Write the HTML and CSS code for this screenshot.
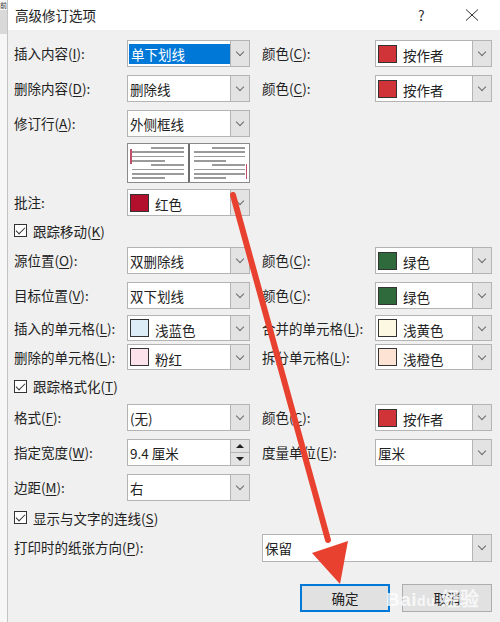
FILE: index.html
```html
<!DOCTYPE html>
<html lang="zh-CN">
<head>
    <meta charset="UTF-8">
    <title>高级修订选项</title>
    <link rel="stylesheet" href="styles.css">
</head>
<body>
    <div class="side">
        <span class="side-glyph">前</span>
        <div class="side-block"></div>
    </div>
    <div class="dialog">
        <div class="titlebar">
            <span class="title">高级修订选项</span>
            <span class="help">?</span>
            <svg class="close" width="16" height="12" viewBox="0 0 16 12">
                <path d="M2 0.5 L14 11.5 M14 0.5 L2 11.5" stroke="#333" stroke-width="1"/>
            </svg>
        </div>

        <div class="form">
            <!-- insert / delete / revision line -->
            <div class="row h35">
                <label>插入内容(<u>I</u>):</label>
                <div class="select"><span class="text selected">单下划线</span><span class="drop"></span></div>
                <label class="rl">颜色(<u>C</u>):</label>
                <div class="select"><i class="swatch red"></i><span class="text lower">按作者</span><span class="drop"></span></div>
            </div>
            <div class="row h35">
                <label>删除内容(<u>D</u>):</label>
                <div class="select"><span class="text">删除线</span><span class="drop"></span></div>
                <label class="rl">颜色(<u>C</u>):</label>
                <div class="select"><i class="swatch red"></i><span class="text lower">按作者</span><span class="drop"></span></div>
            </div>
            <div class="row h33">
                <label>修订行(<u>A</u>):</label>
                <div class="select"><span class="text">外侧框线</span><span class="drop"></span></div>
            </div>
            <div class="row h46">
                <span></span>
                <div class="preview">
                    <div class="page left-bar">
                        <i class="ln short"></i><i class="ln"></i><i class="ln"></i><i class="ln mid"></i>
                        <i class="ln short"></i><i class="ln"></i><i class="ln"></i><i class="ln mid"></i>
                    </div>
                    <div class="page right-bar">
                        <i class="ln short"></i><i class="ln"></i><i class="ln"></i><i class="ln mid"></i>
                        <i class="ln short"></i><i class="ln"></i><i class="ln"></i><i class="ln mid"></i>
                    </div>
                </div>
            </div>
            <div class="row h33">
                <label>批注:</label>
                <div class="select"><i class="swatch crimson"></i><span class="text lower">红色</span><span class="drop"></span></div>
            </div>
            <div class="row h25">
                <div class="check first"><i class="box"></i>跟踪移动(<u>K</u>)</div>
            </div>

            <!-- moves -->
            <div class="row h35">
                <label>源位置(<u>O</u>):</label>
                <div class="select"><span class="text">双删除线</span><span class="drop"></span></div>
                <label class="rl">颜色(<u>C</u>):</label>
                <div class="select"><i class="swatch green"></i><span class="text lower">绿色</span><span class="drop"></span></div>
            </div>
            <div class="row h33">
                <label>目标位置(<u>V</u>):</label>
                <div class="select"><span class="text">双下划线</span><span class="drop"></span></div>
                <label class="rl">颜色(<u>C</u>):</label>
                <div class="select"><i class="swatch green"></i><span class="text lower">绿色</span><span class="drop"></span></div>
            </div>

            <!-- table cells -->
            <div class="row h29">
                <label>插入的单元格(<u>L</u>):</label>
                <div class="select short"><i class="swatch lightblue"></i><span class="text lower">浅蓝色</span><span class="drop"></span></div>
                <label class="rl">合并的单元格(<u>L</u>):</label>
                <div class="select short"><i class="swatch lightyellow"></i><span class="text lower">浅黄色</span><span class="drop"></span></div>
            </div>
            <div class="row h29">
                <label>删除的单元格(<u>L</u>):</label>
                <div class="select short"><i class="swatch pink"></i><span class="text lower">粉红</span><span class="drop"></span></div>
                <label class="rl">拆分单元格(<u>L</u>):</label>
                <div class="select short"><i class="swatch lightorange"></i><span class="text lower">浅橙色</span><span class="drop"></span></div>
            </div>
            <div class="row h31">
                <div class="check"><i class="box"></i>跟踪格式化(<u>T</u>)</div>
            </div>

            <!-- formatting / balloons -->
            <div class="row h35">
                <label>格式(<u>F</u>):</label>
                <div class="select"><span class="text">(无)</span><span class="drop"></span></div>
                <label class="rl">颜色(<u>C</u>):</label>
                <div class="select"><i class="swatch red"></i><span class="text lower">按作者</span><span class="drop"></span></div>
            </div>
            <div class="row h35">
                <label>指定宽度(<u>W</u>):</label>
                <div class="select"><span class="text">9.4 厘米</span>
                    <span class="spin">
                        <span class="spin-btn"><i class="tri up"></i></span>
                        <span class="spin-btn"><i class="tri down"></i></span>
                    </span>
                </div>
                <label class="rl">度量单位(<u>E</u>):</label>
                <div class="select"><span class="text">厘米</span><span class="drop"></span></div>
            </div>
            <div class="row h31">
                <label>边距(<u>M</u>):</label>
                <div class="select"><span class="text">右</span><span class="drop"></span></div>
            </div>
            <div class="row h29">
                <div class="check"><i class="box"></i>显示与文字的连线(<u>S</u>)</div>
            </div>
            <div class="row h50">
                <label class="wide">打印时的纸张方向(<u>P</u>):</label>
                <div class="select tall span2"><span class="text">保留</span><span class="drop"></span></div>
            </div>

            <div class="buttons">
                <button class="btn default">确定</button>
                <button class="btn">取消</button>
            </div>
        </div>
    </div>

    <!-- annotation drawn over the screenshot -->
    <svg class="arrow" width="500" height="622" viewBox="0 0 500 622">
        <line x1="233" y1="195" x2="328" y2="540" stroke="#e9412f" stroke-width="6" stroke-linecap="round"/>
        <polygon points="340,584 312,553 348,541" fill="#e9412f"/>
    </svg>
    <div class="watermark">Bai<span class="paw">du</span> 经验</div>
</body>
</html>
```

FILE: styles.css
```css
* {
    margin: 0;
    padding: 0;
    box-sizing: border-box;
}

body {
    width: 500px;
    height: 622px;
    overflow: hidden;
    display: flex;
    background: #f0f0f0;
    font-family: "Noto Sans CJK SC", "Noto Sans", sans-serif;
    font-size: 13.5px;
    color: #222;
    position: relative;
}

u {
    text-decoration: underline;
    text-underline-offset: 2px;
}

/* window behind the dialog */
.side {
    width: 8px;
    flex: none;
    background: #f7f7f7;
    border-right: 1px solid #c4c4c4;
    overflow: hidden;
}

.side-glyph {
    display: block;
    height: 10px;
    font-size: 7px;
    line-height: 10px;
    color: #333;
}

.side-block {
    height: 24px;
    background: #d9d9d9;
}

.dialog {
    flex: 1;
    display: flex;
    flex-direction: column;
}

.titlebar {
    height: 30px;
    background: #fff;
    display: flex;
    align-items: center;
    padding-left: 7px;
}

.title {
    flex: 1;
    font-size: 13.5px;
    color: #222;
}

.help {
    width: 46px;
    font-size: 14px;
    color: #333;
}

.close {
    margin-right: 20px;
}

.form {
    padding: 10px 0 0 6px;
}

.row {
    display: grid;
    grid-template-columns: 113px 123px 125px 117px;
    align-items: start;
}

.h25 { height: 25px; }
.h29 { height: 29px; }
.h31 { height: 31px; }
.h33 { height: 33px; }
.h35 { height: 35px; }
.h46 { height: 46px; }
.h50 { height: 50px; }

label {
    line-height: 27px;
    white-space: nowrap;
}

label.rl {
    padding-left: 12px;
}

label.wide {
    grid-column: 1 / 3;
}

.row.h29 label {
    line-height: 26px;
}

.select {
    height: 27px;
    background: #fff;
    border: 1px solid #b4b4b4;
    display: flex;
    align-items: center;
    position: relative;
}

.select.short {
    height: 26px;
}

.select.tall {
    height: 28px;
}

.span2 {
    grid-column: 3 / 5;
    margin-left: 12px;
}

.select .text {
    flex: 1;
    padding-left: 2px;
    white-space: nowrap;
}

.select .text.lower {
    padding-left: 6px;
    padding-top: 3px;
}

.select .text.selected {
    flex: none;
    width: 101px;
    margin-left: 1px;
    height: 20px;
    line-height: 20px;
    background: #0078d7;
    color: #fff;
}

.drop {
    width: 19px;
    height: 100%;
    margin-left: auto;
    background: #e3e3e3;
    border-left: 1px solid #b4b4b4;
    position: relative;
}

.drop::after {
    content: "";
    position: absolute;
    left: 6px;
    top: 8px;
    width: 5px;
    height: 5px;
    border-right: 1px solid #6a6a6a;
    border-bottom: 1px solid #6a6a6a;
    transform: rotate(45deg);
}

.swatch {
    width: 19px;
    height: 18px;
    margin-left: 2px;
    border: 1px solid #333;
    flex: none;
}

.red { background: #d13438; }
.crimson { background: #b3102e; }
.green { background: #2e6a3b; }
.lightblue { background: #dcedf8; }
.lightyellow { background: #fcf8e1; }
.pink { background: #fbe2eb; }
.lightorange { background: #fce3d3; }

/* spinner for width */
.spin {
    width: 19px;
    height: 100%;
    display: flex;
    flex-direction: column;
    border-left: 1px solid #b4b4b4;
}

.spin-btn {
    flex: 1;
    background: #e3e3e3;
    display: flex;
    justify-content: center;
    align-items: center;
}

.spin-btn + .spin-btn {
    border-top: 1px solid #b4b4b4;
}

.tri {
    width: 0;
    height: 0;
    border-left: 4px solid transparent;
    border-right: 4px solid transparent;
}

.tri.up { border-bottom: 4px solid #222; }
.tri.down { border-top: 4px solid #222; }

/* revision line preview */
.preview {
    height: 40px;
    display: flex;
    background: #fff;
    border: 1px solid #8a8a8a;
}

.page {
    flex: 1;
    display: flex;
    flex-direction: column;
    justify-content: space-between;
    align-items: flex-end;
    padding: 3px 4px 3px 4px;
    position: relative;
}

.page + .page {
    border-left: 2px solid #6e6e6e;
}

.ln {
    display: block;
    width: 100%;
    height: 1.5px;
    background: #9a9a9a;
}

.ln.short { width: 64%; }
.ln.mid { width: 64%; align-self: flex-start; }

.left-bar::before,
.right-bar::before {
    content: "";
    position: absolute;
    width: 1.5px;
    height: 15px;
    background: #c0506a;
}

.left-bar::before { left: 2px; top: 5px; }
.right-bar::before { right: 2px; top: 20px; }

/* checkboxes */
.check {
    grid-column: 1 / 4;
    display: flex;
    align-items: center;
    height: 25px;
    white-space: nowrap;
}

.check.first {
    height: 17px;
}

.box {
    width: 13px;
    height: 13px;
    border: 1px solid #333;
    background: #fff;
    margin-right: 6px;
    position: relative;
}

.box::after {
    content: "";
    position: absolute;
    left: 3px;
    top: 0px;
    width: 4px;
    height: 8px;
    border-right: 1.3px solid #333;
    border-bottom: 1.3px solid #333;
    transform: rotate(45deg);
}

.h31 .check { height: 26px; }

/* buttons */
.buttons {
    display: flex;
    justify-content: flex-end;
    gap: 12px;
    padding-right: 8px;
}

.btn {
    width: 90px;
    height: 28px;
    font-family: inherit;
    font-size: 13.5px;
    color: #222;
    background: #e1e1e1;
    border: 1px solid #adadad;
}

.btn.default {
    border: 2px solid #0078d7;
}

/* red annotation + watermark */
.arrow {
    position: absolute;
    left: 0;
    top: 0;
    pointer-events: none;
}

.watermark {
    position: absolute;
    left: 386px;
    top: 584px;
    font-family: "Liberation Sans", sans-serif;
    font-size: 19px;
    font-weight: bold;
    color: rgba(255, 255, 255, 0.75);
    letter-spacing: 0.5px;
}

.watermark .paw {
    font-size: 14px;
}
```
